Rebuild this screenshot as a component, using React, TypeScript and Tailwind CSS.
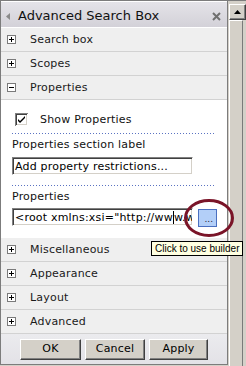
import React from 'react';

const rowsTop = ['Search box', 'Scopes'];
const rowsBottom = ['Miscellaneous', 'Appearance', 'Layout', 'Advanced'];

function ToggleBox(props: { open?: boolean }) {
  return (
    <svg width="9" height="9" viewBox="0 0 9 9" className="shrink-0">
      <rect x="0.5" y="0.5" width="8" height="8" fill="#fff" stroke="#7a7a7a" />
      <line x1="2" y1="4.5" x2="7" y2="4.5" stroke="#000" />
      {!props.open && <line x1="4.5" y1="2" x2="4.5" y2="7" stroke="#000" />}
    </svg>
  );
}

function Row(props: { label: string; open?: boolean }) {
  return (
    <div className="h-[24px] shrink-0 flex items-center pl-[6px] bg-[#efefef] border-b border-[#d2d2d2]">
      <ToggleBox open={props.open} />
      <span className="ml-[14px] text-[11px] leading-[13px] tracking-[0.2px] text-[#1a1a1a]">{props.label}</span>
    </div>
  );
}

function Dotted() {
  return (
    <div className="h-px w-[203px] bg-[linear-gradient(to_right,#5a72c2_1px,transparent_1px)] bg-[length:3px_1px]" />
  );
}

function Btn(props: { label: string; w: string }) {
  return (
    <div
      className={
        'h-[21px] flex items-center justify-center text-[11px] tracking-[0.2px] text-black bg-[#d4d0c8] border border-t-white border-l-white border-r-[#404040] border-b-[#404040] shadow-[inset_-1px_-1px_0_#808080] ' +
        props.w
      }
    >
      {props.label}
    </div>
  );
}

export default function App() {
  return (
    <div className="w-[246px] h-[366px] relative overflow-hidden flex border-t border-[#7c7c7c] bg-[#d4d0c8] font-['DejaVu_Sans',sans-serif]">
      {/* tool pane */}
      <div className="w-[228px] shrink-0 flex flex-col border-l border-r border-b border-[#7c7c7c] bg-white self-start">
        <div className="h-[27px] shrink-0 flex items-start pt-[6px] pl-[5px] border-t border-white border-b border-[#b9b9bd] bg-[linear-gradient(#e4e3e8,#d3d1d8)]">
          <svg width="4" height="7" viewBox="0 0 4 7" className="mt-[5px]">
            <path d="M4 0 L0 3.5 L4 7 Z" fill="#8a8a8a" />
          </svg>
          <span className="ml-[8px] text-[13px] leading-[16px] text-[#111]">Advanced Search Box</span>
          <svg width="9" height="9" viewBox="0 0 9 9" className="ml-auto mr-[6px] mt-[4px]">
            <path d="M1 1 L8 8 M8 1 L1 8" stroke="#6f6f6f" strokeWidth="2" />
          </svg>
        </div>

        {rowsTop.map((r) => (
          <Row key={r} label={r} />
        ))}
        <Row label="Properties" open />

        <div className="h-[138px] shrink-0 flex flex-col pl-[11px] bg-white text-[11px] leading-[13px] tracking-[0.2px]">
          <div className="mt-[13px] h-[13px] flex items-center pl-[3px]">
            <svg width="13" height="13" viewBox="0 0 13 13">
              <rect x="0" y="0" width="13" height="13" fill="#808080" />
              <rect x="1" y="1" width="12" height="12" fill="#fff" />
              <rect x="1" y="1" width="11" height="11" fill="#404040" />
              <rect x="2" y="2" width="10" height="10" fill="#d4d0c8" />
              <rect x="2" y="2" width="9" height="9" fill="#fff" />
              <path d="M3 6 L5 8 L10 3 L10 5 L5 10 L3 8 Z" fill="#000" />
            </svg>
            <span className="ml-[12px] text-[#111]">Show Properties</span>
          </div>
          <div className="mt-[7px]">
            <Dotted />
          </div>
          <div className="mt-[4px] h-[13px] text-[#111]">Properties section label</div>
          <div className="mt-[6px] w-[181px] h-[18px] flex items-center border border-t-[#808080] border-l-[#808080] border-b-white border-r-white shadow-[inset_1px_1px_0_#404040,inset_-1px_-1px_0_#d4d0c8] pl-[2px] text-black whitespace-nowrap overflow-hidden">
            Add property restrictions...
          </div>
          <div className="mt-[10px]">
            <Dotted />
          </div>
          <div className="mt-[4px] h-[13px] text-[#111]">Properties</div>
          <div className="mt-[5px] flex items-start">
            <div className="w-[181px] h-[18px] flex items-center border border-t-[#808080] border-l-[#808080] border-b-white border-r-white shadow-[inset_1px_1px_0_#404040,inset_-1px_-1px_0_#d4d0c8] pl-[2px] text-black whitespace-nowrap overflow-hidden">
              <span className="shrink-0">{'<root xmlns:xsi="http://ww'}</span>
              <span className="shrink-0 w-px h-[13px] bg-black" />
              <span className="shrink-0">{'w.w3'}</span>
            </div>
            <div className="ml-[5px] mt-[1px] w-[19px] h-[18px] flex items-end justify-end pr-[3px] pb-[3px] bg-[#b3cff8] border border-[#4a6fc0]">
              <span className="text-[9px] leading-[8px] tracking-normal text-[#223]">...</span>
            </div>
          </div>
        </div>

        {rowsBottom.map((r) => (
          <Row key={r} label={r} />
        ))}

        <div className="h-[30px] shrink-0 flex items-start pt-[5px] pl-[19px] gap-[4px] bg-[linear-gradient(#ebebee,#e3e2e7)]">
          <Btn label="OK" w="w-[61px]" />
          <Btn label="Cancel" w="w-[60px]" />
          <Btn label="Apply" w="w-[59px]" />
        </div>
      </div>

      {/* scrollbar */}
      <div className="w-[18px] shrink-0 flex flex-col pt-[3px] pl-px">
        <div className="w-[17px] h-[16px] flex items-center justify-center bg-[#d4d0c8] border border-t-white border-l-white border-r-[#404040] border-b-[#404040] shadow-[inset_-1px_-1px_0_#808080]">
          <svg width="7" height="4" viewBox="0 0 7 4">
            <path d="M3.5 0 L7 4 L0 4 Z" fill="#000" />
          </svg>
        </div>
        <div className="w-[14px] flex-1 bg-[#d4d0c8] border-t border-l border-white border-r border-r-[#7a7a7a]" />
      </div>

      {/* builder highlight */}
      <svg width="52" height="40" viewBox="0 0 52 40" className="absolute left-[183px] top-[197px]">
        <ellipse cx="26" cy="20" rx="23.5" ry="17.5" fill="none" stroke="#7a1428" strokeWidth="3" />
      </svg>

      {/* tooltip */}
      <div className="absolute left-[151px] top-[240px] w-[92px] h-[15px] flex items-center pl-[3px] bg-[#ffffe1] border border-black text-[10px] leading-[12px] text-black font-['Liberation_Sans',sans-serif] whitespace-nowrap">
        Click to use builder
      </div>
    </div>
  );
}
